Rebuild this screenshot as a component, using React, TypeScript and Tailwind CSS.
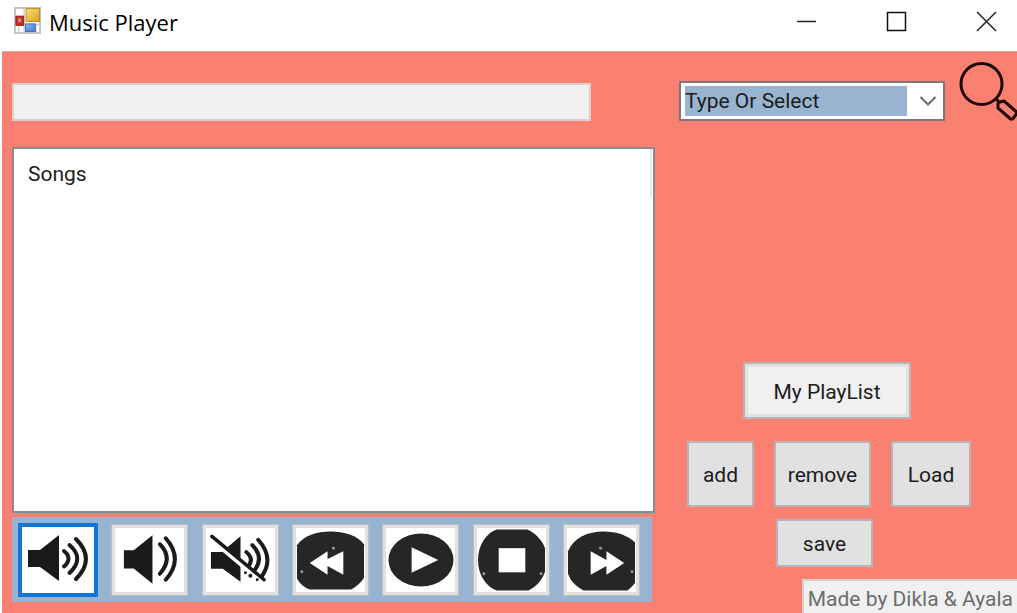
import type { ReactNode } from 'react';

const INK = '#1a1a1a';
const DISC = '#262626';

function AppIcon() {
  return (
    <svg viewBox="0 0 28 28" className="h-[27px] w-[27px] shrink-0" aria-hidden="true">
      <defs>
        <linearGradient id="gold" x1="0" y1="0" x2="1" y2="1">
          <stop offset="0" stopColor="#fbe07a" />
          <stop offset="1" stopColor="#dda31f" />
        </linearGradient>
        <linearGradient id="azure" x1="0" y1="0" x2="1" y2="1">
          <stop offset="0" stopColor="#8fb9f2" />
          <stop offset="1" stopColor="#3f78cf" />
        </linearGradient>
      </defs>
      <rect x="1" y="1" width="26" height="26" fill="#fff" stroke="#c3c3c9" strokeWidth="2" />
      <path d="M10.500 1v26M1 18.500h26M5 20v7M23 20v7" stroke="#cfcfd4" strokeWidth="1.500" />
      <rect x="12.500" y="1.500" width="14" height="13.500" fill="url(#gold)" stroke="#b98a1c" />
      <rect x="2" y="9.500" width="8" height="9.500" fill="#c5352c" stroke="#8e1d18" />
      <rect x="4.500" y="12" width="2.500" height="3.500" fill="#ee9a8c" />
      <rect x="12" y="17.500" width="10" height="8" fill="url(#azure)" stroke="#3a69b5" />
    </svg>
  );
}

function VolumeUpIcon() {
  return (
    <svg viewBox="0 0 70 64" className="h-16 w-[70px]" aria-hidden="true">
      <path d="M5 22h12L36 7v46L17 39H5z" fill={INK} />
      <g fill="none" stroke={INK} strokeWidth="4" strokeLinecap="round">
        <path d="M41 23q9 7.500 0 15.500" />
        <path d="M46.500 17q15.500 13.500 0 28" />
        <path d="M53 11q20 20 0 40" />
      </g>
    </svg>
  );
}

function VolumeDownIcon() {
  return (
    <svg viewBox="0 0 70 64" className="h-16 w-[70px]" aria-hidden="true">
      <path d="M9 22h10L38 7v49L19 40.500H9z" fill={INK} />
      <g fill="none" stroke={INK} strokeWidth="4" strokeLinecap="round">
        <path d="M45.500 16q14 14.500 0 30" />
        <path d="M51.500 10q18.500 21 0 42" />
      </g>
    </svg>
  );
}

function MuteIcon() {
  return (
    <svg viewBox="0 0 70 64" className="h-16 w-[70px]" aria-hidden="true">
      <path d="M5 24h11L35 8v46L17 41H5z" fill={INK} />
      <g fill="none" stroke={INK} strokeWidth="4" strokeLinecap="round">
        <path d="M41 24q8 7 2 14" />
        <path d="M47 17q13 13 1 27" />
        <path d="M53 11.500q17 19 3 38" />
      </g>
      <path d="M5 10l54 45" stroke="#fff" strokeWidth="6" />
      <path d="M6 8l53 44" stroke={INK} strokeWidth="3.500" strokeLinecap="round" />
      <g fill={INK}>
        <circle cx="40" cy="45" r="1.500" />
        <circle cx="45" cy="48" r="2" />
        <circle cx="52" cy="52" r="1.500" />
      </g>
    </svg>
  );
}

function RewindIcon() {
  return (
    <svg viewBox="0 0 70 64" className="h-16 w-[70px]" aria-hidden="true">
      <path d="M1 17C8 7 21 3 35 3s27 4 34 13v34c-3 5-8 9-13 12H14C8 60 4 56 1 51z" fill={DISC} />
      <path d="M14 35l18-12v8l16-8v24l-16-9v9z" fill="#fff" />
      <circle cx="38" cy="20" r="1.500" fill="#999" />
      <circle cx="6" cy="44" r="1.500" fill="#999" />
    </svg>
  );
}

function PlayIcon() {
  return (
    <svg viewBox="0 0 70 64" className="h-16 w-[70px]" aria-hidden="true">
      <ellipse cx="35.500" cy="32" rx="33" ry="27" fill={DISC} />
      <path d="M26 19l27 13-27 13z" fill="#fff" />
    </svg>
  );
}

function StopIcon() {
  return (
    <svg viewBox="0 0 70 64" className="h-16 w-[70px]" aria-hidden="true">
      <path d="M20 1h31c9 4 15 11 18 19v24c-3 9-9 15-17 19H20C9 59 1 47 1 32S9 5 20 1z" fill={DISC} />
      <rect x="22" y="20" width="27" height="24.500" fill="#fff" />
      <circle cx="7" cy="46" r="1.500" fill="#999" />
      <circle cx="65" cy="46" r="1.500" fill="#999" />
    </svg>
  );
}

function ForwardIcon() {
  return (
    <svg viewBox="0 0 70 64" className="h-16 w-[70px]" aria-hidden="true">
      <path d="M1 23C7 9 21 3 37 3c13 0 25 4 32 11v41c-2 3-5 6-8 8H17C9 59 4 54 1 46z" fill={DISC} />
      <path d="M24 23l16 9v-9l18 12-18 12v-9l-16 9z" fill="#fff" />
      <circle cx="34" cy="20" r="1.500" fill="#999" />
      <circle cx="66" cy="44" r="1.500" fill="#999" />
    </svg>
  );
}

function MediaButton({ label, focused = false, children }: { label: string; focused?: boolean; children: ReactNode }) {
  return (
    <button
      type="button"
      aria-label={label}
      className={
        focused
          ? 'flex h-[74px] w-20 shrink-0 items-center justify-center border-4 border-[#0f78d4] bg-white'
          : 'flex h-[72px] w-[77px] shrink-0 items-center justify-center border-4 border-[#e1e1e1] bg-white outline outline-1 -outline-offset-1 outline-[#bdbdbd]'
      }
    >
      {children}
    </button>
  );
}

function TextButton({ className, children }: { className: string; children: ReactNode }) {
  return (
    <button type="button" className={`border-2 border-[#b9b4b3] bg-[#e1e1e1] pt-0.5 text-center ${className}`}>
      {children}
    </button>
  );
}

function TitleBar() {
  return (
    <header className="flex h-[51px] shrink-0 items-center justify-between bg-white pb-2.5 pl-3 pr-5">
      <div className="flex items-center gap-2">
        <AppIcon />
        <h1 className="pt-0.5 font-['Open_Sans',sans-serif] text-[22px] leading-7 text-black">Music Player</h1>
      </div>
      <div className="flex items-center gap-[68px]">
        <button type="button" aria-label="Minimize">
          <svg viewBox="0 0 22 22" className="h-[22px] w-[22px]"><path d="M2 11.500h19" stroke="#222" strokeWidth="1.500" /></svg>
        </button>
        <button type="button" aria-label="Maximize">
          <svg viewBox="0 0 22 22" className="h-[22px] w-[22px]"><path d="M2.500 2.500h18v18h-18z" fill="none" stroke="#111" strokeWidth="1.500" /></svg>
        </button>
        <button type="button" aria-label="Close">
          <svg viewBox="0 0 22 22" className="h-[22px] w-[22px]"><path d="M2 2l19 19M21 2L2 21" stroke="#222" strokeWidth="1.500" /></svg>
        </button>
      </div>
    </header>
  );
}

export default function App() {
  return (
    <div className="flex min-h-screen flex-col bg-white pl-0.5 font-['Roboto',sans-serif] text-[21px] leading-7 text-[#1c1c1c]">
      <TitleBar />
      <main className="flex flex-1 border-t border-[#d9a59f] bg-[#fa8072]">
        <div className="flex min-w-0 flex-1 flex-col pb-[11px] pl-2.5 pt-[31px]">
          <input
            type="text"
            readOnly
            aria-label="Now playing"
            className="h-[38px] w-[90%] border-2 border-[#d8cfce] bg-[#f0f0f0] px-2 outline-none"
          />
          <section className="mt-[26px] flex-1 border-2 border-[#8a8a92] bg-white">
            <table className="w-full border-collapse">
              <thead>
                <tr>
                  <th scope="col" className="h-12 border-r-2 border-[#ececec] pl-3.5 pt-0.5 text-left font-normal">Songs</th>
                  <td className="w-0.5" />
                </tr>
              </thead>
            </table>
          </section>
          <div className="mr-[3px] mt-1 flex h-[85px] items-center justify-between gap-2 bg-[#99b4d1] pl-1.5 pr-3">
            <MediaButton label="Volume up" focused><VolumeUpIcon /></MediaButton>
            <MediaButton label="Volume down"><VolumeDownIcon /></MediaButton>
            <MediaButton label="Mute"><MuteIcon /></MediaButton>
            <MediaButton label="Previous"><RewindIcon /></MediaButton>
            <MediaButton label="Play"><PlayIcon /></MediaButton>
            <MediaButton label="Stop"><StopIcon /></MediaButton>
            <MediaButton label="Next"><ForwardIcon /></MediaButton>
          </div>
        </div>

        <aside className="flex w-[362px] shrink-0 flex-col pl-6 pt-2.5">
          <div className="flex items-start justify-between">
            <div className="relative mt-[19px] w-[266px] border-2 border-[#7d7577] bg-white">
              <select
                aria-label="Type or select"
                className="block h-9 w-full appearance-none bg-[#99b4d1] bg-clip-content py-[3px] pl-1 pr-9 outline-none"
              >
                <option>Type Or Select</option>
              </select>
              <svg viewBox="0 0 18 12" className="pointer-events-none absolute right-1.5 top-3 h-3 w-[18px]" aria-hidden="true">
                <path d="M1.500 2L9 9.500 16.500 2" fill="none" stroke="#6b6b6b" strokeWidth="2" />
              </svg>
            </div>
            <button type="button" aria-label="Search">
              <svg viewBox="0 0 58 60" className="h-[60px] w-[58px]">
                <g fill="none" stroke="#1d0704" strokeWidth="3">
                  <circle cx="22.500" cy="22" r="20.500" />
                  <path d="M36 36l4 4" />
                  <path d="M39 46v-4q0-2 2-2l4-1 12 10.500q1.500 1.500 0 3l-3 4q-1 1.500-3 0z" strokeLinejoin="round" />
                </g>
              </svg>
            </button>
          </div>

          <div className="mt-auto flex flex-col">
            <button
              type="button"
              className="ml-16 h-[57px] w-[168px] border-2 border-[#b9b4b3] bg-[#f0f0f0] pt-0.5 shadow-[inset_0_0_0_3px_#e1e1e1]"
            >
              My PlayList
            </button>
            <div className="ml-2 mt-[22px] flex gap-5">
              <TextButton className="h-[66px] w-[67px]">add</TextButton>
              <TextButton className="h-[66px] w-[97px]">remove</TextButton>
              <TextButton className="h-[66px] w-20">Load</TextButton>
            </div>
            <TextButton className="ml-[97px] mt-3 h-12 w-[97px]">save</TextButton>
            <p className="mt-3 h-[34px] self-end border-l-2 border-t-2 border-[#d8cfce] bg-[#f0f0f0] px-1 pt-1 text-[#6d6d6d]">
              Made by Dikla &amp; Ayala
            </p>
          </div>
        </aside>
      </main>
    </div>
  );
}
